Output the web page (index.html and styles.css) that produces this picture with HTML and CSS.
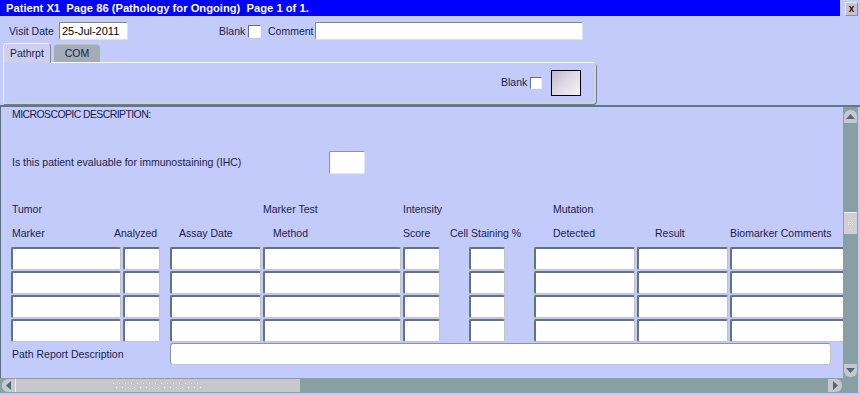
FILE: index.html
```html
<!DOCTYPE html>
<html>
<head>
    <title>Patient X1 Page 86</title>
    <link rel="stylesheet" href="styles.css">
</head>
<body>
    <div class="window">
        <div class="titlebar">
            <div class="title">Patient X1  Page 86 (Pathology for Ongoing)  Page 1 of 1.</div>
            <div class="close">x</div>
        </div>

        <div class="top">
            <div class="top-row">
                <label class="lbl-visit" for="visit">Visit Date</label>
                <input type="text" id="visit" class="field date" value="25-Jul-2011">
                <label class="lbl-blank">Blank</label>
                <input type="checkbox" class="check">
                <label class="lbl-comment" for="comment">Comment</label>
                <input type="text" id="comment" class="field comment">
            </div>
            <div class="tabs">
                <div class="tab active">Pathrpt</div>
                <div class="tab">COM</div>
            </div>
            <div class="tab-panel">
                <label class="lbl-blank2">Blank</label>
                <input type="checkbox" class="check small">
                <div class="swatch"></div>
            </div>
        </div>

        <div class="main">
            <div class="content">
                <div class="heading">MICROSCOPIC DESCRIPTION:</div>

                <div class="ihc-row">
                    <label class="ihc-label">Is this patient evaluable for immunostaining (IHC)</label>
                    <input type="text" class="cell ihc">
                </div>

                <div class="head1">
                    <span>Tumor</span>
                    <span>Marker Test</span>
                    <span>Intensity</span>
                    <span>Mutation</span>
                </div>
                <div class="head2">
                    <span>Marker</span>
                    <span>Analyzed</span>
                    <span>Assay Date</span>
                    <span>Method</span>
                    <span>Score</span>
                    <span>Cell Staining %</span>
                    <span>Detected</span>
                    <span>Result</span>
                    <span>Biomarker Comments</span>
                </div>

                <div class="rows">
                    <div class="row">
                        <input class="cell c-marker"><input class="cell c-analyzed"><input class="cell c-assay"><input class="cell c-method"><input class="cell c-score"><input class="cell c-staining"><input class="cell c-detected"><input class="cell c-result"><input class="cell c-comments">
                    </div>
                    <div class="row">
                        <input class="cell c-marker"><input class="cell c-analyzed"><input class="cell c-assay"><input class="cell c-method"><input class="cell c-score"><input class="cell c-staining"><input class="cell c-detected"><input class="cell c-result"><input class="cell c-comments">
                    </div>
                    <div class="row">
                        <input class="cell c-marker"><input class="cell c-analyzed"><input class="cell c-assay"><input class="cell c-method"><input class="cell c-score"><input class="cell c-staining"><input class="cell c-detected"><input class="cell c-result"><input class="cell c-comments">
                    </div>
                    <div class="row">
                        <input class="cell c-marker"><input class="cell c-analyzed"><input class="cell c-assay"><input class="cell c-method"><input class="cell c-score"><input class="cell c-staining"><input class="cell c-detected"><input class="cell c-result"><input class="cell c-comments">
                    </div>
                </div>

                <div class="path-row">
                    <label class="path-label">Path Report Description</label>
                    <input type="text" class="path-field">
                </div>
            </div>

            <div class="vscroll">
                <div class="vbtn up">
                    <svg width="9" height="5" viewBox="0 0 9 5"><path d="M0 5 L4.5 0 L9 5 Z" fill="#50687a"/></svg>
                </div>
                <div class="vthumb"><span class="vgrip"></span></div>
                <div class="vbtn down">
                    <svg width="9" height="5" viewBox="0 0 9 5"><path d="M0 0 L4.5 5 L9 0 Z" fill="#50687a"/></svg>
                </div>
            </div>
        </div>

        <div class="hscroll">
            <div class="hbtn left">
                <svg width="5" height="9" viewBox="0 0 5 9"><path d="M5 0 L0 4.5 L5 9 Z" fill="#50687a"/></svg>
            </div>
            <div class="hthumb"><span class="hgrip"></span></div>
            <div class="hbtn right">
                <svg width="5" height="9" viewBox="0 0 5 9"><path d="M0 0 L5 4.5 L0 9 Z" fill="#50687a"/></svg>
            </div>
        </div>
    </div>
</body>
</html>
```

FILE: styles.css
```css
* {
    box-sizing: border-box;
}

body {
    margin: 0;
    background-color: #c3cbfb;
    font-family: "Liberation Sans", Arial, sans-serif;
    font-size: 10.5px;
    line-height: 13px;
    color: #1c1c4c;
    overflow: hidden;
}

.window {
    width: 860px;
    height: 395px;
}

/* title bar */
.titlebar {
    display: flex;
    height: 17px;
}

.title {
    width: 840px;
    height: 16px;
    padding-left: 6px;
    background-color: #0000ff;
    color: #fff;
    font-weight: bold;
    font-size: 11.2px;
    line-height: 16px;
    white-space: pre;
}

.close {
    width: 13px;
    height: 14px;
    margin: 2px 0 0 5px;
    background-color: #c4c4c8;
    border: 1px solid;
    border-color: #ececec #8a8a90 #8a8a90 #ececec;
    font-size: 10px;
    font-weight: bold;
    line-height: 11px;
    text-align: center;
    color: #500010;
}

/* top form */
.top {
    height: 88px;
    padding-top: 5px;
}

.top-row {
    display: flex;
    align-items: center;
    height: 18px;
    padding-left: 9px;
}

.lbl-visit {
    width: 50px;
}

.field {
    height: 18px;
    padding: 0 2px;
    background-color: #fff;
    border: 1px solid;
    border-color: #7c8490 #e2e2e6 #e2e2e6 #7c8490;
    border-radius: 2px;
    font: inherit;
    color: #000;
}

.date {
    width: 69px;
    font-size: 11px;
}

.lbl-blank {
    width: 29px;
    margin-left: 91px;
}

.check {
    appearance: none;
    width: 13px;
    height: 13px;
    margin: 0;
    background-color: #fff;
    border: 1px solid;
    border-color: #666e7c #f2f2f2 #f2f2f2 #666e7c;
}

.check.small {
    width: 12px;
    height: 12px;
    margin-right: 9px;
}

.lbl-comment {
    width: 47px;
    margin-left: 7px;
}

.comment {
    width: 268px;
}

.tabs {
    display: flex;
    align-items: flex-end;
    height: 19px;
    margin: 3px 0 0 3px;
}

.tab {
    width: 46px;
    height: 18px;
    margin-left: 3px;
    background-color: #a4acb6;
    border-radius: 4px 4px 0 0;
    border-top: 1px solid #b8c0c8;
    text-align: center;
    line-height: 17px;
}

.tab.active {
    position: relative;
    z-index: 1;
    width: 48px;
    height: 20px;
    margin: 0 0 -1px 0;
    padding-left: 6px;
    background-color: #ccd0ee;
    border-top: 1px solid #f6f6f6;
    border-left: 1px solid #f6f6f6;
    border-right: 1px solid #7c8898;
    text-align: left;
    line-height: 19px;
}

.tab-panel {
    display: flex;
    align-items: center;
    justify-content: flex-end;
    width: 593px;
    height: 42px;
    margin-left: 3px;
    padding-right: 13px;
    border-top: 1px solid #f6f6f6;
    border-left: 1px solid #f6f6f6;
    border-right: 2px solid #d2d2da;
    border-bottom: 2px solid #d2d2da;
    border-radius: 0 4px 4px 0;
    box-shadow: 1px 1px 0 #6c8090;
}

.lbl-blank2 {
    width: 29px;
}

.swatch {
    width: 30px;
    height: 26px;
    border: 1px solid #000;
    background: linear-gradient(135deg, #c2b8cc 0%, #dcd8e4 45%, #f4f4f6 100%);
}

/* main area */
.main {
    display: flex;
    height: 273px;
    border-top: 2px solid #62788a;
}

.content {
    width: 843px;
    padding: 1px 0 0 10px;
    border-left: 1px solid #5a7080;
    overflow: hidden;
}

.heading {
    padding-left: 1px;
    letter-spacing: -0.6px;
}

.ihc-row {
    display: flex;
    align-items: center;
    height: 23px;
    margin-top: 30px;
    padding-left: 1px;
}

.ihc-label {
    width: 317px;
}

.head1,
.head2 {
    display: grid;
    padding-left: 1px;
    white-space: nowrap;
}

.head1 {
    margin-top: 29px;
    grid-template-columns: 251px 140px 150px auto;
}

.head2 {
    margin-top: 11px;
    grid-template-columns: 102px 65px 94px 130px 47px 103px 102px 75px auto;
}

.rows {
    margin-top: 7px;
}

.row {
    display: flex;
    height: 23px;
    margin-bottom: 1px;
}

.cell {
    flex-shrink: 0;
    height: 23px;
    margin: 0;
    padding: 0 2px;
    background-color: #fff;
    border-top: 2px solid #5d7682;
    border-left: 2px solid #5d7682;
    border-right: 1px solid #c4c4c8;
    border-bottom: 1px solid #c4c4c8;
    border-radius: 2px;
    font: inherit;
}

.c-marker   { width: 110px; }
.c-analyzed { width: 37px;  margin-left: 2px; }
.c-assay    { width: 91px;  margin-left: 10px; }
.c-method   { width: 138px; margin-left: 2px; }
.c-score    { width: 37px;  margin-left: 2px; }
.c-staining { width: 36px;  margin-left: 29px; }
.c-detected { width: 101px; margin-left: 29px; }
.c-result   { width: 91px;  margin-left: 2px; }
.c-comments { width: 130px; margin-left: 2px; }

.ihc {
    width: 36px;
    border-color: #8a94a0;
    border-width: 1px;
    border-right-color: #e6e6ea;
    border-bottom-color: #e6e6ea;
}

.path-row {
    display: flex;
    align-items: center;
    height: 22px;
    margin-top: 1px;
}

.path-label {
    width: 159px;
    padding-left: 1px;
}

.path-field {
    width: 661px;
    height: 22px;
    background-color: #fff;
    border: 1px solid;
    border-color: #8a94a0 #c4c4c8 #c4c4c8 #8a94a0;
    border-radius: 3px;
    font: inherit;
}

/* scrollbars */
.vscroll {
    display: flex;
    flex-direction: column;
    width: 15px;
    padding: 3px 1px 1px 1px;
    background-color: #88a0a4;
}

.vbtn {
    display: flex;
    align-items: center;
    justify-content: center;
    width: 13px;
    height: 13px;
    background-color: #c8c8cc;
}

.vbtn.up {
    border-radius: 6px 6px 0 0;
}

.vbtn.down {
    margin-top: auto;
    border-radius: 0 0 6px 6px;
}

.vthumb {
    display: flex;
    align-items: center;
    justify-content: center;
    width: 13px;
    height: 22px;
    margin-top: 89px;
    background-color: #cfcfd4;
    border-top: 1px solid #f0f0f0;
}

.vgrip {
    width: 5px;
    height: 3px;
    border-top: 1px dotted #f8f8f8;
    border-bottom: 1px dotted #f8f8f8;
}

.hscroll {
    display: flex;
    align-items: center;
    width: 858px;
    height: 15px;
    background-color: #88a0a4;
}

.hbtn {
    display: flex;
    align-items: center;
    justify-content: center;
    width: 13px;
    height: 13px;
    background-color: #c8c8cc;
}

.hbtn.left {
    margin-left: 2px;
    border-radius: 6px 0 0 6px;
}

.hbtn.right {
    width: 14px;
    margin: 0 16px 0 auto;
    border-radius: 0 6px 6px 0;
}

.hthumb {
    display: flex;
    align-items: center;
    justify-content: center;
    width: 285px;
    height: 13px;
    background-color: #c8c8cc;
    border-left: 1px solid #f0f0f0;
}

.hgrip {
    width: 90px;
    height: 5px;
    background:
        linear-gradient(90deg, #fafafa 1px, transparent 1px) 0 0 / 6px 1px repeat-x,
        linear-gradient(90deg, #fafafa 1px, transparent 1px) 3px 4px / 6px 1px repeat-x;
}
```
